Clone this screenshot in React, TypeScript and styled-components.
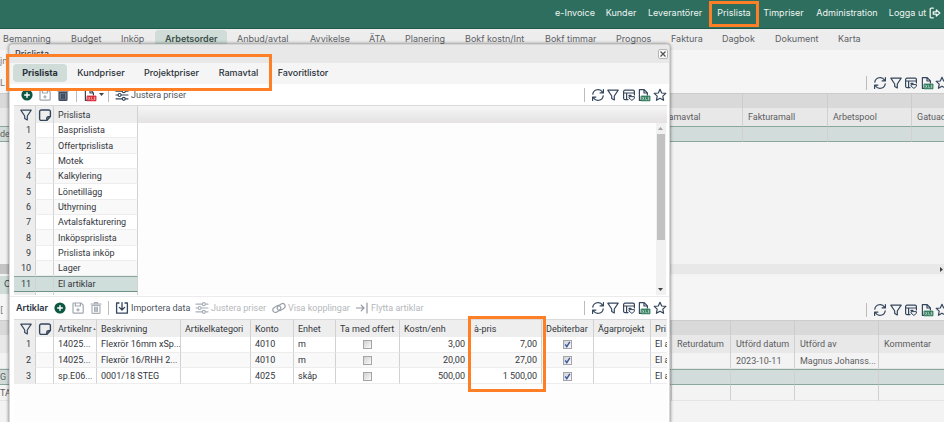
import React from "react";
import styled, { createGlobalStyle, css } from "styled-components";

const GlobalStyle = createGlobalStyle`
  * { box-sizing: border-box; }
  html, body { margin: 0; height: 100%; }
  body, button, input, table {
    font-family: Inter, "Open Sans", sans-serif;
    font-size: 9px;
    line-height: 12px;
    color: #3b4048;
  }
  button { background: none; border: 0; padding: 0; cursor: pointer; }
`;

const dense = css`
  font-family: Roboto, Inter, sans-serif;
  font-size: 9px;
`;

const Page = styled.div`
  position: relative;
  display: flex;
  flex-direction: column;
  min-height: 100vh;
  overflow: hidden;
  background: #f3f3f3;
`;

const TopBar = styled.header`
  display: flex;
  justify-content: flex-end;
  align-items: flex-start;
  height: 29px;
  flex: none;
  background: #2e6e5e;
  border-bottom: 1px solid #1f594a;
`;

const TopLink = styled.a<{ $w: number; $marked?: boolean }>`
  display: flex;
  align-items: center;
  justify-content: center;
  gap: 3px;
  width: ${(p) => p.$w}px;
  height: 26px;
  margin-top: 1px;
  padding-bottom: 2px;
  color: #eef5f2;
  text-decoration: none;
  white-space: nowrap;
  ${(p) => p.$marked && css`border: 3px solid #ff7f27;`}
`;

const NavBar = styled.nav`
  display: flex;
  flex: none;
  height: 21px;
  overflow: hidden;
  background: #ededed;
`;

const NavLink = styled.a<{ $w: number; $active?: boolean }>`
  flex: none;
  width: ${(p) => p.$w}px;
  height: 21px;
  margin-top: 1px;
  padding: 3px 0 0 10px;
  color: ${(p) => (p.$active ? "#3d5049" : "#5d6266")};
  font-weight: ${(p) => (p.$active ? 600 : 400)};
  background: ${(p) => (p.$active ? "#cfdcd8" : "transparent")};
  border-radius: 4px 4px 0 0;
  text-decoration: none;
  white-space: nowrap;
  &:first-child { padding-left: 3px; }
`;

const BackPane = styled.section<{ $h: number }>`
  flex: none;
  height: ${(p) => p.$h}px;
  background: #f3f3f3;
`;

const BackHead = styled.div<{ $h: number }>`
  display: flex;
  align-items: flex-end;
  justify-content: space-between;
  height: ${(p) => p.$h}px;
  overflow: hidden;
  background: #f5f5f5;
`;

const BackLabels = styled.div`
  display: flex;
  flex-direction: column;
  gap: 10px;
  width: 10px;
  padding-bottom: 4px;
  overflow: hidden;
  color: #777;
  white-space: nowrap;
`;

const BackTab = styled.button`
  width: 10px;
  height: 20px;
  padding-left: 4px;
  background: #cfdcd8;
  text-align: left;
`;

const BackTools = styled.div`
  display: flex;
  flex: none;
  margin-right: -5px;
  padding-bottom: 3px;
`;

const BackTable = styled.table`
  ${dense}
  width: 100%;
  table-layout: fixed;
  border-collapse: separate;
  border-spacing: 0;
  th, td {
    height: 16px;
    padding: 0 0 0 5px;
    text-align: left;
    font-weight: 400;
    white-space: nowrap;
    overflow: hidden;
    color: #5c5c5e;
    border-right: 1px solid #d0d0d0;
  }
  th { height: 18px; background: #e8e8e8; }
  th:last-child, td:last-child { border-right: 0; }
  tr.band th { height: 15px; background: #d9d9d9; border-color: #cccccc; border-top: 1px solid #cccccc; }
  td { border-bottom: 1px solid #e4e4e4; }
  td:first-child { padding-left: 0; }
  tr.selected td { background: #d2dcda; border-top: 1px solid #8aa79d; border-bottom: 1px solid #8aa79d; }
`;

const HScroll = styled.div`
  display: flex;
  justify-content: flex-end;
  align-items: center;
  height: 10px;
  margin-top: 122px;
  background: linear-gradient(90deg, #c4c4c4 10px, #e8e8e8 10px);
`;

const Dialog = styled.section`
  position: absolute;
  top: 44px;
  bottom: 0;
  left: 9px;
  width: 70%;
  display: flex;
  flex-direction: column;
  background: #ffffff;
  border: 1px solid #d6d6d6;
  border-bottom: 0;
  border-radius: 4px 4px 0 0;
  box-shadow: 0 0 3px 1px rgba(0, 0, 0, 0.35);
`;

const TitleBar = styled.div`
  display: flex;
  justify-content: space-between;
  height: 18px;
  flex: none;
  padding: 3px 1px 0 5px;
  background: #e8e8e8;
  border-radius: 4px 4px 0 0;
`;

const Title = styled.h1`
  margin: 0;
  font-size: 9px;
  font-weight: 500;
`;

const CloseButton = styled.button`
  display: grid;
  place-items: center;
  width: 10px;
  height: 10px;
  margin-top: 1px;
  background: #fafafa;
  border: 1px solid #b5b5b5;
  border-radius: 2px;
`;

const TabStrip = styled.div`
  position: relative;
  display: flex;
  height: 21px;
  flex: none;
  padding: 1px 0 2px 3px;
  background: #f5f5f5;
`;

const Tab = styled.button<{ $w: number; $active?: boolean }>`
  width: ${(p) => p.$w}px;
  height: 18px;
  border-radius: 4px;
  color: #2b313a;
  font-weight: ${(p) => (p.$active ? 700 : 500)};
  background: ${(p) => (p.$active ? "#cfdcd8" : "transparent")};
  white-space: nowrap;
`;

const TabMark = styled.div`
  position: absolute;
  top: -9px;
  left: -4px;
  width: 266px;
  height: 37px;
  border: 3px solid #ff7f27;
  pointer-events: none;
`;

const Toolbar = styled.div<{ $lower?: boolean }>`
  display: flex;
  align-items: center;
  height: ${(p) => (p.$lower ? 23 : 21)}px;
  flex: none;
  padding: 0 2px 0 ${(p) => (p.$lower ? 6 : 8)}px;
  margin-top: ${(p) => (p.$lower ? 1 : 0)}px;
  border-top: ${(p) => (p.$lower ? "1px solid #ebebeb" : "0")};
  background: #ffffff;
`;

const ToolHeading = styled.h2`
  margin: 0;
  width: 35px;
  font-size: 9px;
  font-weight: 600;
  color: #2b3442;
`;

const Tool = styled.button<{ $w: number }>`
  ${dense}
  display: flex;
  align-items: center;
  gap: 2px;
  flex: none;
  width: ${(p) => p.$w}px;
  height: 16px;
  padding-left: 2px;
  color: #4d535b;
  white-space: nowrap;
  svg { flex: none; }
  &:disabled { color: #b4b7bb; }
`;

const Divider = styled.i`
  flex: none;
  width: 1px;
  height: 14px;
  margin-right: 4px;
  background: #bcbcbc;
`;

const ViewTools = styled.div`
  display: flex;
  justify-content: space-between;
  flex: none;
  width: 76px;
  margin-left: 2px;
`;

const ViewButton = styled.button`
  width: 14px;
  height: 14px;
  svg { display: block; }
`;

const Spacer = styled.span`
  flex: 1;
`;

const GridBox = styled.div<{ $h?: number }>`
  position: relative;
  margin: 0 2px 0 4px;
  ${(p) => (p.$h ? css`height: ${p.$h}px; flex: none;` : css`flex: 1;`)}
`;

const GridClip = styled.div`
  height: 100%;
  overflow: hidden;
  background: #fdfdfd;
`;

const Grid = styled.table<{ $h: number }>`
  ${dense}
  width: 100%;
  height: ${(p) => p.$h}px;
  table-layout: fixed;
  border-collapse: separate;
  border-spacing: 0;
  th, td {
    padding: 0 4px;
    text-align: left;
    font-weight: 400;
    white-space: nowrap;
    overflow: hidden;
    color: #33363c;
    border-right: 1px solid #d2d2d2;
  }
  thead th {
    height: 18px;
    background: #eeeeee;
    border-top: 1px solid #dadada;
    svg { display: block; }
  }
  thead th:nth-child(1) { padding: 0 0 0 5px; }
  thead th:nth-child(2) { padding: 0 0 0 2px; }
  th:last-child, td:last-child { padding-right: 0; border-right: 0; }
  tbody td, tbody th { height: 15px; border-bottom: 1px solid #ededed; }
  tbody th { text-align: right; background: #ededed; }
  tbody td { background: #ffffff; }
  tbody tr:nth-child(even) td { background: #f9f9f9; }
  tbody tr.selected > * { background: #d0dedb; border-top: 1px solid #8aa79d; border-bottom: 1px solid #6f9286; }
  tbody td.num { text-align: right; }
  tbody td.check { text-align: center; }
  thead th.filler { background: linear-gradient(#f6f6f6, #e4e2e3); }
  tbody td.filler, tbody tr:nth-child(even) td.filler, tbody tr.selected td.filler { background: #fdfdfd; border: 0; }
  tbody tr.tail > * { height: 3px; border-bottom: 0; }
`;

const Clipped = styled.span`
  display: block;
  margin-right: -4px;
`;

const SortHead = styled.span`
  display: flex;
  align-items: center;
  justify-content: space-between;
  margin-right: -4px;
`;

const VScroll = styled.div`
  position: absolute;
  top: 18px;
  right: 1px;
  bottom: 0;
  width: 10px;
  display: flex;
  flex-direction: column;
  align-items: center;
  background: #f1f1f1;
`;

const Thumb = styled.div`
  width: 8px;
  height: 106px;
  margin-bottom: auto;
  background: #c1c1c1;
`;

const ColumnMark = styled.div`
  position: absolute;
  top: -3px;
  left: 454px;
  width: 78px;
  height: 76px;
  border: 3px solid #ff7f27;
  pointer-events: none;
`;

const CheckWrap = styled.label`
  display: inline-grid;
  place-items: center;
  vertical-align: middle;
  > * { grid-area: 1 / 1; }
  svg { pointer-events: none; }
`;

const CheckInput = styled.input`
  appearance: none;
  width: 9px;
  height: 9px;
  margin: 0;
  background: linear-gradient(135deg, #d2d2d2, #fafafa);
  border: 1px solid #a3a5a8;
`;

const NAVY = "#34465c";

type IconProps = { color?: string; size?: number };

const Svg = ({ children, color = NAVY, size = 14 }: IconProps & { children: React.ReactNode }) => (
  <svg width={size} height={size} viewBox="0 0 14 14" fill="none" stroke={color} strokeWidth="1.2" strokeLinecap="round" strokeLinejoin="round" aria-hidden="true">
    {children}
  </svg>
);

const RefreshIcon = () => (
  <Svg>
    <path d="M1.8 6.2A5.3 5.3 0 0 1 11.6 4.2M12.4 1.6V4.9H9.1M12.2 7.8A5.3 5.3 0 0 1 2.4 9.8M1.6 12.4V9.1H4.9" />
  </Svg>
);
const FilterIcon = () => (
  <Svg>
    <path d="M1.8 2.2H12.2L8.3 8V12L5.7 10.4V8Z" />
  </Svg>
);
const LayoutIcon = () => (
  <Svg>
    <path d="M6 11.6H3A1.4 1.4 0 0 1 1.6 10.2V3.6A1.4 1.4 0 0 1 3 2.2H11A1.4 1.4 0 0 1 12.4 3.6V7M1.6 5H12.4M4.6 5V11.6M7 7.4H9" />
    <path d="M7.4 8.6H12.4V10.4L9.9 12.4L7.4 10.4Z" strokeWidth="1" />
  </Svg>
);
const NoteIcon = () => (
  <Svg>
    <path d="M3.4 2H10.6A1.7 1.7 0 0 1 12.4 3.8V8.6L8.8 12.4H3.4A1.7 1.7 0 0 1 1.6 10.6V3.8A1.7 1.7 0 0 1 3.4 2ZM8.8 12.2V10.2A1.4 1.4 0 0 1 10.2 8.8H12.2" strokeWidth="1.4" />
  </Svg>
);
const FileIcon = ({ tone }: { tone: string }) => (
  <Svg>
    <path d="M2.4 12.4V1.6H7.2L10.4 4.8V7M7 1.8V5H10.2M2.4 12.4H4" />
    <rect x="4.4" y="8" width="8.6" height="4.8" fill={tone} stroke={tone} strokeWidth="0.8" />
    <path d="M5.6 9.2L7 11.6M7 9.2L5.6 11.6M8.6 9.2V11.6H9.6M12 9.2H11V10.4H12V11.6H11" stroke="#ffffff" strokeWidth="0.5" />
  </Svg>
);
const StarIcon = () => (
  <Svg>
    <path d="M7 1.3L8.7 5L12.8 5.4L9.8 8.1L10.6 12.3L7 10.2L3.4 12.3L4.2 8.1L1.2 5.4L5.3 5Z" />
  </Svg>
);
const PlusIcon = () => (
  <Svg>
    <circle cx="7" cy="7" r="5.6" fill="#0d5643" stroke="none" />
    <path d="M7 4.6V9.4M4.6 7H9.4" stroke="#ffffff" strokeWidth="1.4" />
  </Svg>
);
const SaveIcon = () => (
  <Svg color="#a0a7b0">
    <path d="M2.8 2H10L12.2 4.2V11.4A.8.8 0 0 1 11.4 12.2H2.8A.8.8 0 0 1 2 11.4V2.8A.8.8 0 0 1 2.8 2ZM4.4 2V5H9.4V2M7 7.6V10M5.8 8.8H8.2" />
  </Svg>
);
const TrashIcon = ({ solid }: { solid?: boolean }) => (
  <Svg color={solid ? "#3c4a5e" : "#a8aeb6"}>
    <path d="M3 4.4H11V11.4A1 1 0 0 1 10 12.4H4A1 1 0 0 1 3 11.4Z" fill={solid ? "#6b7789" : "none"} />
    <path d="M2 3H12M5.4 2.8V1.6H8.6V2.8M5.6 6.2V10.6M8.4 6.2V10.6M7 6.2V10.6" />
  </Svg>
);
const SlidersIcon = ({ color }: IconProps) => (
  <Svg color={color}>
    <path d="M1 3.2H7M10.6 3.2H13M1 7H2.8M6.4 7H13M1 10.8H7M10.6 10.8H13" />
    <circle cx="8.8" cy="3.2" r="1.5" />
    <circle cx="4.6" cy="7" r="1.5" />
    <circle cx="8.8" cy="10.8" r="1.5" />
  </Svg>
);
const ImportIcon = () => (
  <Svg>
    <path d="M4 2H1.6V12.2H12.4V2H10M7 1.6V8.8M4.4 6.4L7 9L9.6 6.4" strokeWidth="1.3" />
  </Svg>
);
const LinkIcon = () => (
  <Svg color="#9aa1aa">
    <rect x="0.6" y="5.4" width="8.4" height="5" rx="2.5" transform="rotate(-35 4.8 7.9)" />
    <rect x="5" y="3.6" width="8.4" height="5" rx="2.5" transform="rotate(-35 9.2 6.1)" />
  </Svg>
);
const MoveIcon = () => (
  <Svg color="#8f97a1">
    <path d="M1.4 7H9M6.2 4.2L9 7L6.2 9.8M12 2V12" />
  </Svg>
);
const LogoutIcon = () => (
  <Svg color="#eef5f2" size={12}>
    <path d="M5 1.4H2.6A1.2 1.2 0 0 0 1.4 2.6V11.4A1.2 1.2 0 0 0 2.6 12.6H5M5 5.6H8.6V3.4L12.6 7L8.6 10.6V8.4H5Z" strokeWidth="1.5" />
  </Svg>
);
const Arrow = ({ dir, tone = "#444444" }: { dir: "up" | "down" | "right"; tone?: string }) => (
  <svg width="5" height="11" viewBox="0 0 5 11" fill={tone} aria-hidden="true">
    <path d={dir === "up" ? "M0 7H5L2.5 4Z" : dir === "down" ? "M0 4H5L2.5 7Z" : "M1 3V8L4 5.5Z"} />
  </svg>
);
const SortMark = () => (
  <svg width="3" height="2" viewBox="0 0 3 2" fill="#777777" aria-hidden="true">
    <path d="M0 2L1.5 0L3 2Z" />
  </svg>
);

const views: [string, React.ReactNode][] = [
  ["Uppdatera", <RefreshIcon />],
  ["Filter", <FilterIcon />],
  ["Layout", <LayoutIcon />],
  ["Exportera till Excel", <FileIcon tone="#2c7a5a" />],
  ["Favorit", <StarIcon />],
];

const ViewGroup = () => (
  <>
    <Divider />
    <ViewTools>
      {views.map(([label, icon]) => (
        <ViewButton key={label} aria-label={label}>{icon}</ViewButton>
      ))}
    </ViewTools>
  </>
);

const Check = ({ on, label }: { on?: boolean; label: string }) => (
  <CheckWrap>
    <CheckInput type="checkbox" defaultChecked={on} aria-label={label} />
    {on && (
      <svg width="9" height="9" viewBox="0 0 9 9" fill="none" stroke="#3f5aa0" strokeWidth="1.5" aria-hidden="true">
        <path d="M2.2 4.4L3.8 6.6L6.8 1.8" />
      </svg>
    )}
  </CheckWrap>
);

const topLinks: [string, number][] = [
  ["e-Invoice", 52], ["Kunder", 40], ["Leverantörer", 68], ["Prislista", 50],
  ["Timpriser", 49], ["Administration", 78], ["Logga ut", 58],
];

const navLinks: [string, number][] = [
  ["Bemanning", 61], ["Budget", 50], ["Inköp", 44], ["Arbetsorder", 72], ["Anbud/avtal", 73],
  ["Avvikelse", 59], ["ÄTA", 36], ["Planering", 60], ["Bokf kostn/Int", 80], ["Bokf timmar", 71],
  ["Prognos", 55], ["Faktura", 51], ["Dagbok", 53], ["Dokument", 63], ["Karta", 50],
];

const tabs: [string, number][] = [
  ["Prislista", 54], ["Kundpriser", 68], ["Projektpriser", 73], ["Ramavtal", 61], ["Favoritlistor", 68],
];

const lists = [
  "Basprislista", "Offertprislista", "Motek", "Kalkylering", "Lönetillägg", "Uthyrning",
  "Avtalsfakturering", "Inköpsprislista", "Prislista inköp", "Lager", "El artiklar",
];

const articleCols = [22, 18, 43, 84, 70, 43, 42, 64, 70, 72, 52, 57, undefined];
const articles = [
  ["14025...", "Flexrör 16mm xSp...", "4010", "m", "3,00", "7,00"],
  ["14025...", "Flexrör 16/RHH 2...", "4010", "m", "20,00", "27,00"],
  ["sp.E06...", "0001/18 STEG", "4025", "skåp", "500,00", "1 500,00"],
];

const Cols = ({ widths }: { widths: (number | undefined)[] }) => (
  <colgroup>
    {widths.map((w, i) => <col key={i} width={w} />)}
  </colgroup>
);

export default function App() {
  return (
    <Page>
      <GlobalStyle />
      <TopBar>
        {topLinks.map(([label, w]) => (
          <TopLink key={label} href="#" $w={w} $marked={label === "Prislista"}>
            {label}
            {label === "Logga ut" && <LogoutIcon />}
          </TopLink>
        ))}
      </TopBar>
      <NavBar>
        {navLinks.map(([label, w]) => (
          <NavLink key={label} href="#" $w={w} $active={label === "Arbetsorder"}>{label}</NavLink>
        ))}
      </NavBar>

      <BackPane $h={226}>
        <BackHead $h={43}>
          <BackLabels><span>jn</span><span>L</span></BackLabels>
          <BackTools><ViewGroup /></BackTools>
        </BackHead>
        <BackTable>
          <Cols widths={[658, 85, 85, 84, undefined]} />
          <thead>
            <tr className="band"><th /><th /><th /><th /><th /></tr>
            <tr><th /><th>Ramavtal</th><th>Fakturamall</th><th>Arbetspool</th><th>Gatuad</th></tr>
          </thead>
          <tbody>
            <tr className="selected"><td>de</td><td /><td /><td /><td /></tr>
          </tbody>
        </BackTable>
        <HScroll><Arrow dir="right" /></HScroll>
      </BackPane>
      <BackPane $h={146}>
        <BackHead $h={44}>
          <BackLabels><BackTab>O</BackTab><span>[</span></BackLabels>
          <BackTools><ViewGroup /></BackTools>
        </BackHead>
        <BackTable>
          <Cols widths={[672, 59, 64, 84, undefined]} />
          <thead>
            <tr className="band"><th /><th /><th /><th /><th /></tr>
            <tr><th /><th>Returdatum</th><th>Utförd datum</th><th>Utförd av</th><th>Kommentar</th></tr>
          </thead>
          <tbody>
            <tr><td /><td /><td>2023-10-11</td><td>Magnus Johanss...</td><td /></tr>
            <tr className="selected"><td>G</td><td /><td /><td /><td /></tr>
            <tr><td>TA</td><td /><td /><td /><td /></tr>
          </tbody>
        </BackTable>
      </BackPane>

      <Dialog role="dialog" aria-label="Prislista">
        <TitleBar>
          <Title>Prislista</Title>
          <CloseButton aria-label="Stäng">
            <svg width="6" height="6" viewBox="0 0 6 6" stroke="#555555" strokeWidth="1.3" aria-hidden="true"><path d="M.5.5L5.5 5.5M5.5.5L.5 5.5" /></svg>
          </CloseButton>
        </TitleBar>
        <TabStrip role="tablist">
          {tabs.map(([label, w], i) => (
            <Tab key={label} role="tab" aria-selected={i === 0} $w={w} $active={i === 0}>{label}</Tab>
          ))}
          <TabMark />
        </TabStrip>
        <Toolbar>
          <Tool $w={18} aria-label="Ny"><PlusIcon /></Tool>
          <Tool $w={18} aria-label="Spara"><SaveIcon /></Tool>
          <Tool $w={22} aria-label="Ta bort"><TrashIcon solid /></Tool>
          <Divider />
          <Tool $w={27} aria-label="Skriv ut PDF"><FileIcon tone="#d8232f" /><Arrow dir="down" /></Tool>
          <Divider />
          <Tool $w={80}><SlidersIcon />Justera priser</Tool>
          <Spacer />
          <ViewGroup />
        </Toolbar>
        <GridBox $h={190}>
          <GridClip>
            <Grid $h={190}>
              <Cols widths={[22, 18, 84, undefined]} />
              <thead>
                <tr>
                  <th aria-label="Filter"><FilterIcon /></th>
                  <th aria-label="Anteckning"><NoteIcon /></th>
                  <th>Prislista</th>
                  <th className="filler" />
                </tr>
              </thead>
              <tbody>
                {lists.map((name, i) => (
                  <tr key={name} className={i === 10 ? "selected" : undefined}>
                    <th scope="row">{i + 1}</th><td /><td>{name}</td><td className="filler" />
                  </tr>
                ))}
                <tr className="tail"><th /><td /><td /><td className="filler" /></tr>
              </tbody>
            </Grid>
          </GridClip>
          <VScroll>
            <Arrow dir="up" tone="#a3a3a3" />
            <Thumb />
            <Arrow dir="down" />
          </VScroll>
        </GridBox>
        <Toolbar $lower>
          <ToolHeading>Artiklar</ToolHeading>
          <Tool $w={18} aria-label="Ny artikel"><PlusIcon /></Tool>
          <Tool $w={18} aria-label="Spara artikel" disabled><SaveIcon /></Tool>
          <Tool $w={21} aria-label="Ta bort artikel" disabled><TrashIcon /></Tool>
          <Divider />
          <Tool $w={80}><ImportIcon />Importera data</Tool>
          <Tool $w={77} disabled><SlidersIcon color="#a8aeb6" />Justera priser</Tool>
          <Tool $w={83} disabled><LinkIcon />Visa kopplingar</Tool>
          <Tool $w={80} disabled><MoveIcon />Flytta artiklar</Tool>
          <Spacer />
          <ViewGroup />
        </Toolbar>
        <GridBox>
          <GridClip>
            <Grid $h={65}>
              <Cols widths={articleCols} />
              <thead>
                <tr>
                  <th aria-label="Filter"><FilterIcon /></th>
                  <th aria-label="Anteckning"><NoteIcon /></th>
                  <th><SortHead>Artikelnr<SortMark /></SortHead></th>
                  <th>Beskrivning</th><th>Artikelkategori</th><th>Konto</th><th>Enhet</th>
                  <th>Ta med offert</th><th>Kostn/enh</th><th>à-pris</th><th>Debiterbar</th>
                  <th>Ägarprojekt</th><th>Pri</th>
                </tr>
              </thead>
              <tbody>
                {articles.map(([nr, text, account, unit, cost, price], i) => (
                  <tr key={i}>
                    <th scope="row">{i + 1}</th>
                    <td />
                    <td><Clipped>{nr}</Clipped></td>
                    <td><Clipped>{text}</Clipped></td>
                    <td />
                    <td>{account}</td>
                    <td>{unit}</td>
                    <td className="check"><Check label="Ta med offert" /></td>
                    <td className="num">{cost}</td>
                    <td className="num">{price}</td>
                    <td className="check"><Check on label="Debiterbar" /></td>
                    <td />
                    <td>El a</td>
                  </tr>
                ))}
              </tbody>
            </Grid>
          </GridClip>
          <ColumnMark />
        </GridBox>
      </Dialog>
    </Page>
  );
}
